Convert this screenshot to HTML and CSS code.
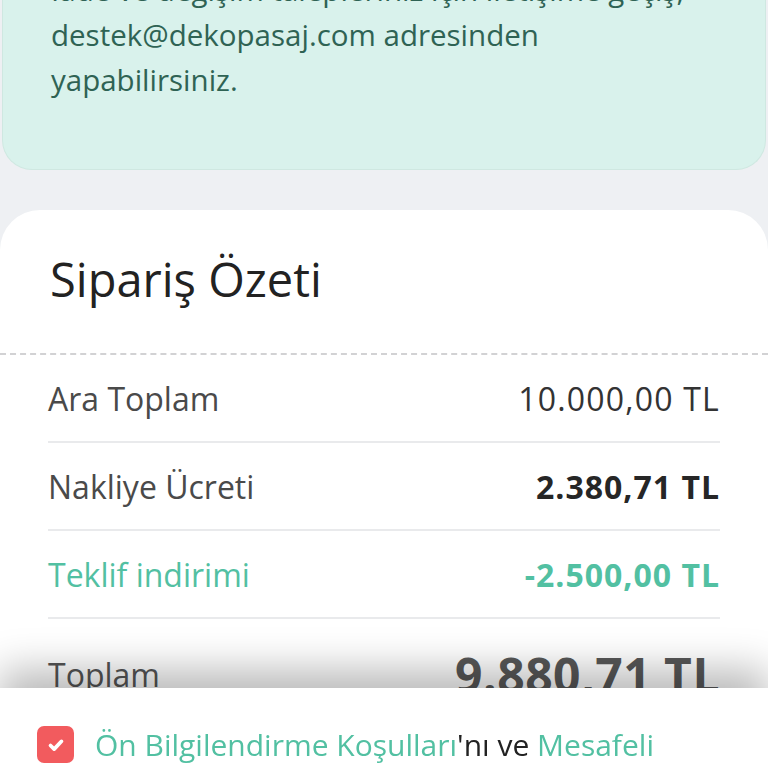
FILE: index.html
```html
<!DOCTYPE html>
<html lang="tr">
<head>
  <meta charset="UTF-8">
  <title>Sipariş Özeti</title>
  <link rel="stylesheet" href="styles.css">
</head>
<body>

  <div class="page">
    <div class="info-box">
      <p>İade ve değişim talepleriniz için iletişime geçiş,<br>
        destek@dekopasaj.com adresinden<br>
        yapabilirsiniz.</p>
    </div>

    <div class="summary">
      <h2 class="summary-title">Sipariş Özeti</h2>

      <div class="summary-rows">
        <div class="row">
          <span class="label">Ara Toplam</span>
          <span class="value">10.000,00 TL</span>
        </div>
        <div class="row">
          <span class="label">Nakliye Ücreti</span>
          <span class="value bold">2.380,71 TL</span>
        </div>
        <div class="row discount">
          <span class="label">Teklif indirimi</span>
          <span class="value bold">-2.500,00 TL</span>
        </div>
        <div class="row total">
          <span class="label">Toplam</span>
          <span class="value">9.880,71 TL</span>
        </div>
      </div>
    </div>
  </div>

  <!-- alt onay paneli -->
  <div class="bottom-sheet">
    <label class="agree">
      <span class="checkbox">
        <svg viewBox="0 0 24 24" width="22" height="22">
          <path d="M6 12.5l4 4L18 8" fill="none" stroke="#fff" stroke-width="4" stroke-linecap="round" stroke-linejoin="round"/>
        </svg>
      </span>
      <span class="agree-text"><a href="#">Ön Bilgilendirme Koşulları</a>'nı ve <a href="#">Mesafeli</a></span>
    </label>
  </div>

</body>
</html>
```

FILE: styles.css
```css
body {
  margin: 0;
  height: 768px;
  overflow: hidden;
  background: #eef0f3;
  font-family: 'Open Sans', 'Noto Sans', sans-serif;
}

.page {
  margin-top: -67px;
}

.info-box {
  background: #d9f2ec;
  border: 1px solid #cfe8e1;
  border-top: none;
  border-radius: 0 0 30px 30px;
  margin: 0 2px;
  padding: 34px 40px 67px 48px;
}

.info-box p {
  margin: 0;
  font-size: 29.5px;
  line-height: 45px;
  color: #2f6354;
  white-space: nowrap;
}

.summary {
  margin-top: 40px;
  background: #fff;
  border-radius: 40px 40px 0 0;
  height: 800px;
}

.summary-title {
  margin: 0;
  height: 145px;
  box-sizing: border-box;
  padding: 0 50px 6px;
  display: flex;
  align-items: center;
  font-size: 47px;
  font-weight: 400;
  color: #222;
  border-bottom: 2px dashed #d2d2d4;
}

.summary-rows {
  padding: 0 48px;
}

.row {
  display: flex;
  justify-content: space-between;
  align-items: center;
  height: 86px;
  border-bottom: 2px solid #e9eaec;
  font-size: 32px;
  color: #4a4a4a;
}

.row .value {
  color: #333;
  letter-spacing: 1.2px;
}

.row .bold {
  font-weight: 700;
  color: #262626;
  letter-spacing: 1px;
}

.row.discount .label,
.row.discount .value {
  color: #52c0a2;
}

.row.total {
  height: 110px;
  border-bottom: none;
}

.row.total .label {
  color: #555;
}

.row.total .value {
  font-size: 48px;
  font-weight: 700;
  color: #585858;
  letter-spacing: 0.5px;
}

.bottom-sheet {
  position: fixed;
  left: 0;
  right: 0;
  bottom: 0;
  height: 80px;
  background: #fff;
  box-shadow: 0 -18px 40px rgba(0, 0, 0, 0.28);
  padding: 0 37px;
}

.agree {
  display: flex;
  align-items: center;
  gap: 21px;
  margin-top: 36px;
}

.checkbox {
  width: 37px;
  height: 37px;
  border-radius: 7px;
  background: #f25b5e;
  display: flex;
  align-items: center;
  justify-content: center;
  flex-shrink: 0;
}

.agree-text {
  font-size: 30px;
  color: #222;
  white-space: nowrap;
}

.agree-text a {
  color: #52c0a2;
  text-decoration: none;
}
```
